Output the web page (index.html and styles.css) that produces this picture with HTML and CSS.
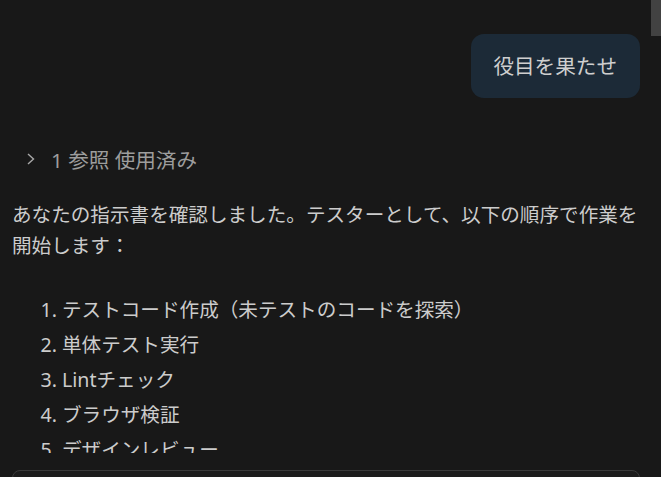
FILE: index.html
```html
<!DOCTYPE html>
<html lang="ja">
<head>
<meta charset="utf-8">
<title>チャット</title>
<link rel="stylesheet" href="styles.css">
</head>
<body>
<div class="panel">
  <div class="thread">
    <div class="request-row">
      <div class="bubble">役目を果たせ</div>
    </div>

    <div class="refs">
      <svg class="chevron" width="10" height="14" viewBox="0 0 10 14" aria-hidden="true">
        <path d="M2 2 L7.5 7 L2 12" fill="none" stroke="#a8a8a8" stroke-width="1.4"/>
      </svg>
      <span class="refs-label">1 参照 使用済み</span>
    </div>

    <div class="response">
      <p class="lead">あなたの指示書を確認しました。テスターとして、以下の順序で作業を開始します：</p>
      <ol class="steps">
        <li>テストコード作成（未テストのコードを探索）</li>
        <li>単体テスト実行</li>
        <li>Lintチェック</li>
        <li>ブラウザ検証</li>
        <li>デザインレビュー</li>
      </ol>
    </div>
  </div>

  <div class="composer"></div>

  <div class="scroll-thumb"></div>
</div>
</body>
</html>
```

FILE: styles.css
```css
* {
  box-sizing: border-box;
}

html, body {
  margin: 0;
  padding: 0;
  background: #181818;
}

body {
  width: 661px;
  height: 477px;
  overflow: hidden;
  font-family: "Noto Sans", "Noto Sans CJK JP", sans-serif;
  font-size: 19.6px;
  color: #cccccc;
}

.panel {
  position: relative;
  height: 477px;
  display: flex;
  flex-direction: column;
}

/* message history, clipped above the composer */
.thread {
  height: 453px;
  overflow: hidden;
  padding: 34px 21px 0 12px;
  flex: none;
}

.request-row {
  display: flex;
  justify-content: flex-end;
}

.bubble {
  height: 64px;
  line-height: 64px;
  padding: 0 23px 0 22px;
  background: #1c2a37;
  border-radius: 13px;
  color: #cfcfcf;
  font-size: 20.6px;
}

.refs {
  display: flex;
  align-items: center;
  gap: 15px;
  margin-top: 45px;
  padding-left: 14px;
  height: 31px;
  color: #9d9d9d;
  font-size: 20.6px;
}

.chevron {
  flex: none;
}

.response {
  margin-top: 25px;
}

.lead {
  margin: 0 0 31px;
  line-height: 31px;
}

.steps {
  margin: 0;
  padding-left: 50px;
}

.steps li {
  line-height: 35px;
}

.composer {
  margin: 17px 21px 0 12px;
  height: 40px;
  border: 1px solid #3a3a3a;
  border-radius: 8px;
  background: #1c1c1c;
  flex: none;
}

.scroll-thumb {
  position: absolute;
  top: 0;
  right: 0;
  width: 10px;
  height: 36px;
  background: #424242;
}
```
